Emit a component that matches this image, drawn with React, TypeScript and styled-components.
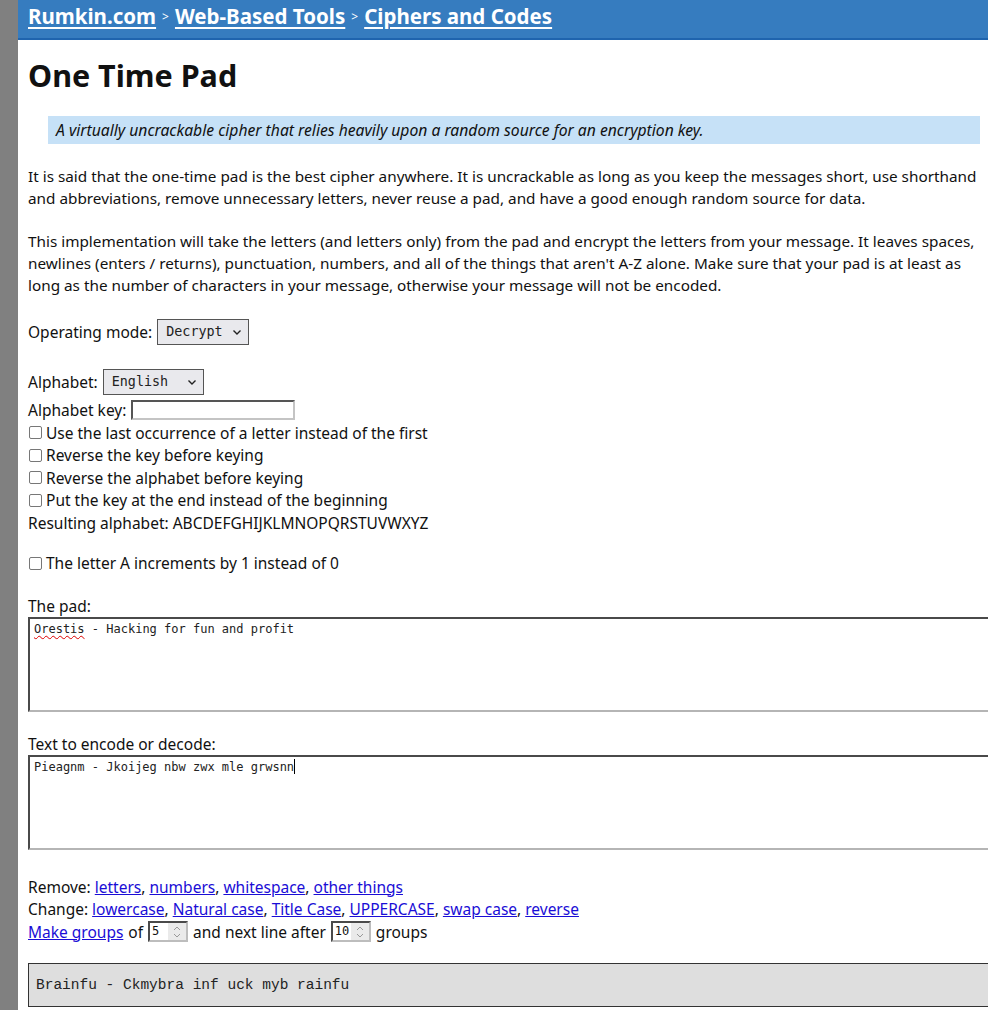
import React from "react";
import styled, { createGlobalStyle } from "styled-components";

const Global = createGlobalStyle`
  html, body { margin: 0; padding: 0; background: #fff; overflow-x: hidden; }
  body { font-family: "Noto Sans", "Open Sans", sans-serif; font-size: 16px; color: #111; }
`;

const Page = styled.div`
  display: flex;
  min-height: 1010px;
`;

const Rail = styled.div`
  width: 18px;
  flex: 0 0 18px;
  background: #808080;
`;

const Main = styled.div`
  flex: 1;
  min-width: 0;
`;

const Header = styled.header`
  height: 40px;
  background: #367cbf;
  border-bottom: 2px solid #1f64ae;
  box-sizing: border-box;
  padding: 1px 10px 0;
  display: flex;
  align-items: flex-start;
  gap: 6px;
  font-size: 20.5px;
  line-height: 30px;
  font-weight: 700;
`;

const Crumb = styled.a`
  color: #fff;
  text-decoration: underline;
  text-underline-offset: 3px;
`;

const Sep = styled.span`
  color: #fff;
  font-size: 12px;
  font-weight: 400;
  line-height: 32px;
`;

const Content = styled.div`
  padding: 0 0 0 10px;
`;

const Title = styled.h1`
  font-size: 30.5px;
  font-weight: 700;
  margin: 16px 0 22px;
  line-height: 38px;
`;

const Quote = styled.div`
  margin: 0 8px 0 20px;
  background: #c6e1f7;
  padding: 3px 8px;
  font-style: italic;
  font-size: 15.7px;
  line-height: 22px;
`;

const Para = styled.p`
  margin: 21px 0 0;
  line-height: 22px;
  font-size: 15.3px;
`;

const Row = styled.div<{ $mt?: number }>`
  margin-top: ${(p) => p.$mt ?? 0}px;
  display: flex;
  align-items: center;
  gap: 5px;
  font-size: 15.5px;
  line-height: 22.5px;
  white-space: nowrap;
`;

const Select = styled.div<{ $w: number }>`
  width: ${(p) => p.$w}px;
  height: 26px;
  flex: 0 0 auto;
  box-sizing: border-box;
  border: 1px solid #555;
  background: #e9e9ed;
  display: flex;
  align-items: center;
  justify-content: space-between;
  padding: 0 6px 0 8px;
  font-family: "DejaVu Sans Mono", monospace;
  font-size: 13.4px;
  color: #222;
`;

const TextInput = styled.div`
  width: 164px;
  height: 20px;
  box-sizing: border-box;
  border: 2px solid #c4c4c4;
  border-top-color: #555;
  border-left-color: #555;
  background: #fff;
`;

const Box = styled.span`
  width: 13px;
  height: 13px;
  box-sizing: border-box;
  border: 1px solid #777;
  border-radius: 2px;
  background: #fff;
  flex: 0 0 13px;
`;

const CheckRow = styled.div<{ $mt?: number }>`
  margin-top: ${(p) => p.$mt ?? 0}px;
  display: flex;
  align-items: center;
  gap: 4px;
  padding-left: 1px;
  font-size: 15.5px;
  line-height: 22.5px;
`;

const Label = styled.div<{ $mt: number }>`
  margin-top: ${(p) => p.$mt}px;
  font-size: 15.5px;
  line-height: 22px;
`;

const Area = styled.div`
  width: 975px;
  height: 95px;
  box-sizing: border-box;
  border: 2px solid #4a4a4a;
  border-right-color: #b5b5b5;
  border-bottom-color: #b5b5b5;
  background: #fff;
  padding: 2px 4px;
  font-family: "DejaVu Sans Mono", monospace;
  font-size: 12px;
  line-height: 16px;
  color: #222;
  white-space: pre;
`;

const Squiggle = styled.span`
  text-decoration: underline wavy #d00;
  text-decoration-thickness: 1px;
  text-underline-offset: 2px;
`;

const Caret = styled.span`
  display: inline-block;
  width: 1px;
  height: 15px;
  background: #000;
  vertical-align: -3px;
`;

const Link = styled.a`
  color: #1a0dd6;
  text-decoration: underline;
`;

const Num = styled.div<{ $w: number }>`
  width: ${(p) => p.$w}px;
  height: 21px;
  flex: 0 0 auto;
  box-sizing: border-box;
  border: 2px solid #bdbdbd;
  border-top-color: #4a4a4a;
  border-left-color: #4a4a4a;
  display: flex;
  align-items: stretch;
  background: #fff;
  font-family: "DejaVu Sans Mono", monospace;
  font-size: 12px;
`;

const NumVal = styled.span`
  flex: 1;
  padding-left: 2px;
  line-height: 17px;
  color: #111;
`;

const Spin = styled.span`
  width: 18px;
  background: #eaeaea;
  display: flex;
  align-items: center;
  justify-content: center;
`;

const Output = styled.div`
  margin-top: 20px;
  width: 975px;
  height: 44px;
  box-sizing: border-box;
  background: #dedede;
  border: 1px solid #333;
  padding: 0 7px;
  display: flex;
  align-items: center;
  font-family: "Liberation Mono", monospace;
  font-size: 14.5px;
  color: #222;
`;

const Chevron = () => (
  <svg width="10" height="7" viewBox="0 0 10 7">
    <path d="M1.5 1.5 L5 5 L8.5 1.5" fill="none" stroke="#222" strokeWidth="1.4" />
  </svg>
);

const SpinIcon = () => (
  <svg width="10" height="14" viewBox="0 0 10 14">
    <path d="M2 5 L5 2 L8 5 M2 9 L5 12 L8 9" fill="none" stroke="#999" strokeWidth="1" />
  </svg>
);

export default function App() {
  return (
    <>
      <Global />
      <Page>
        <Rail />
        <Main>
          <Header>
            <Crumb>Rumkin.com</Crumb>
            <Sep>&gt;</Sep>
            <Crumb>Web-Based Tools</Crumb>
            <Sep>&gt;</Sep>
            <Crumb>Ciphers and Codes</Crumb>
          </Header>
          <Content>
            <Title>One Time Pad</Title>
            <Quote>A virtually uncrackable cipher that relies heavily upon a random source for an encryption key.</Quote>
            <Para>
              It is said that the one-time pad is the best cipher anywhere. It is uncrackable as long as you keep the messages short, use shorthand and abbreviations, remove unnecessary letters, never reuse a pad, and have a good enough random source for data.
            </Para>
            <Para>
              This implementation will take the letters (and letters only) from the pad and encrypt the letters from your message. It leaves spaces, newlines (enters / returns), punctuation, numbers, and all of the things that aren't A-Z alone. Make sure that your pad is at least as long as the number of characters in your message, otherwise your message will not be encoded.
            </Para>
            <Row $mt={23}>
              Operating mode:
              <Select $w={92}>
                Decrypt
                <Chevron />
              </Select>
            </Row>
            <Row $mt={24}>
              Alphabet:
              <Select $w={101}>
                English
                <Chevron />
              </Select>
            </Row>
            <Row $mt={4}>
              Alphabet key:
              <TextInput />
            </Row>
            <CheckRow>
              <Box />
              Use the last occurrence of a letter instead of the first
            </CheckRow>
            <CheckRow>
              <Box />
              Reverse the key before keying
            </CheckRow>
            <CheckRow>
              <Box />
              Reverse the alphabet before keying
            </CheckRow>
            <CheckRow>
              <Box />
              Put the key at the end instead of the beginning
            </CheckRow>
            <Row>Resulting alphabet: ABCDEFGHIJKLMNOPQRSTUVWXYZ</Row>
            <CheckRow $mt={18}>
              <Box />
              The letter A increments by 1 instead of 0
            </CheckRow>
            <Label $mt={20}>The pad:</Label>
            <Area>
              <Squiggle>Orestis</Squiggle> - Hacking for fun and profit
            </Area>
            <Label $mt={21}>Text to encode or decode:</Label>
            <Area>
              Pieagnm - Jkoijeg nbw zwx mle grwsnn<Caret />
            </Area>
            <Row $mt={26}>
              <span>
                Remove: <Link>letters</Link>, <Link>numbers</Link>, <Link>whitespace</Link>, <Link>other things</Link>
              </span>
            </Row>
            <Row>
              <span>
                Change: <Link>lowercase</Link>, <Link>Natural case</Link>, <Link>Title Case</Link>, <Link>UPPERCASE</Link>, <Link>swap case</Link>, <Link>reverse</Link>
              </span>
            </Row>
            <Row>
              <Link>Make groups</Link> of
              <Num $w={40}>
                <NumVal>5</NumVal>
                <Spin>
                  <SpinIcon />
                </Spin>
              </Num>
              and next line after
              <Num $w={40}>
                <NumVal>10</NumVal>
                <Spin>
                  <SpinIcon />
                </Spin>
              </Num>
              groups
            </Row>
            <Output>Brainfu - Ckmybra inf uck myb rainfu</Output>
          </Content>
        </Main>
      </Page>
    </>
  );
}
